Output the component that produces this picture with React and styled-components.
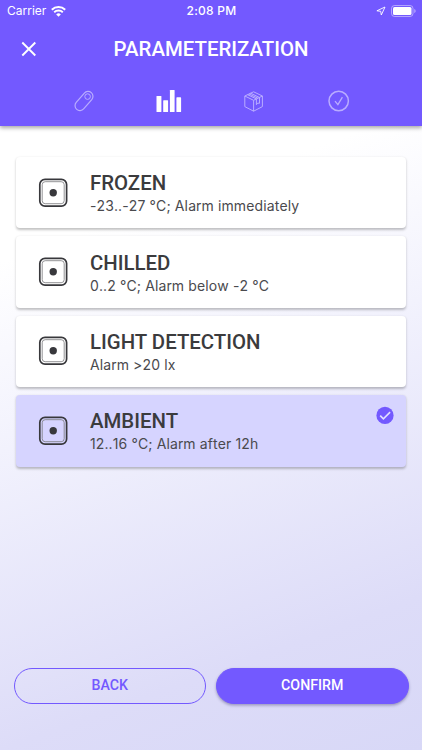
import React, { useState } from "react";
import styled, { createGlobalStyle } from "styled-components";

const GlobalStyle = createGlobalStyle`
  * {
    box-sizing: border-box;
  }

  body {
    margin: 0;
    font-family: Roboto, sans-serif;
    color: #3b3b3d;
  }

  button {
    font-family: inherit;
    cursor: pointer;
  }
`;

const Screen = styled.div`
  display: flex;
  flex-direction: column;
  height: 750px;
  overflow: hidden;
  background: linear-gradient(
    160deg,
    #ffffff 29%,
    #f2f2fd 50%,
    #dddcf8 83%,
    #d8d8f7 100%
  );
`;

const Header = styled.header`
  height: 126px;
  flex-shrink: 0;
  color: #fff;
  background: #7359ff;
  box-shadow: 0 2px 4px rgba(0, 0, 0, 0.34);
`;

const StatusBar = styled.div`
  display: grid;
  grid-template-columns: 1fr auto 1fr;
  align-items: center;
  height: 22px;
  padding: 0 6px 0 7px;
  font-family: Inter, sans-serif;
  font-size: 12px;
  line-height: 22px;
`;

const StatusGroup = styled.div`
  display: flex;
  align-items: center;
  justify-content: ${({ $end }) => ($end ? "flex-end" : "flex-start")};
  gap: 5px;
`;

const Clock = styled.span`
  font-weight: 500;
  letter-spacing: 0.25px;
`;

const TitleBar = styled.div`
  display: grid;
  grid-template-columns: 58px 1fr 58px;
  align-items: center;
  height: 54px;
`;

const CloseButton = styled.button`
  display: flex;
  justify-content: center;
  padding: 0;
  border: 0;
  color: inherit;
  background: none;
`;

const Title = styled.h1`
  margin: 0;
  font-size: 20.4px;
  font-weight: 500;
  line-height: 24px;
  text-align: center;
  white-space: nowrap;
`;

const Steps = styled.nav`
  display: grid;
  grid-template-columns: repeat(4, 85px);
  justify-content: center;
  height: 50px;
`;

const Step = styled.span`
  display: flex;
  align-items: center;
  justify-content: center;
  opacity: ${({ $active }) => ($active ? 1 : 0.5)};
`;

const List = styled.main`
  display: flex;
  flex-direction: column;
  flex: 1;
  gap: 8px;
  padding: 31px 16.4px 0;
`;

const Card = styled.button`
  display: flex;
  align-items: center;
  height: 71.4px;
  padding: 0 12px 0 21.6px;
  border: 0;
  border-radius: 4px;
  color: inherit;
  text-align: left;
  background: ${({ $selected }) => ($selected ? "#d6d4ff" : "#fff")};
  box-shadow: 0 1.5px 2.5px rgba(0, 0, 0, 0.24);
`;

const CardText = styled.span`
  display: flex;
  flex: 1;
  flex-direction: column;
  margin: 2px 0 0 22px;
`;

const CardTitle = styled.span`
  font-size: 20.4px;
  font-weight: 500;
  line-height: 24px;
`;

const CardDetail = styled.span`
  font-family: Inter, sans-serif;
  font-size: 14px;
  font-kerning: none;
  line-height: 20px;
  letter-spacing: 0.12px;
  margin-top: 1px;
  color: #4a4a4e;
`;

const Tick = styled.span`
  align-self: flex-start;
  display: flex;
  margin-top: 11px;
`;

const Footer = styled.footer`
  display: grid;
  grid-template-columns: 1fr 1fr;
  gap: 10px;
  padding: 0 13.5px 46.5px;
`;

const PillButton = styled.button`
  height: 36px;
  padding: 0 0 1px;
  border: 1px solid #7359ff;
  border-radius: 18px;
  font-size: 14.2px;
  font-weight: 500;
  color: ${({ $filled }) => ($filled ? "#fff" : "#7359ff")};
  background: ${({ $filled }) => ($filled ? "#7359ff" : "transparent")};
  box-shadow: ${({ $filled }) =>
    $filled ? "0 1.5px 3px rgba(40, 30, 90, 0.36)" : "none"};
`;

const WifiIcon = () => (
  <svg width="15" height="11" viewBox="0 0 15 11" fill="none" stroke="#fff">
    <path d="M.8 3.8a9.6 9.6 0 0 1 13.4 0" strokeWidth="2" />
    <path d="M3.2 6.3a6.2 6.2 0 0 1 8.6 0" strokeWidth="1.9" />
    <path d="M7.5 10.8 5.2 8.4a3.3 3.3 0 0 1 4.6 0z" fill="#fff" stroke="none" />
  </svg>
);

const LocationIcon = () => (
  <svg width="10" height="10" viewBox="0 0 10 10" fill="none">
    <path
      d="M9 1 .9 4.8l3.8.5L5.3 9z"
      stroke="#fff"
      strokeOpacity=".9"
      strokeLinejoin="round"
    />
  </svg>
);

const BatteryIcon = () => (
  <svg width="25" height="12" viewBox="0 0 25 12">
    <rect
      x=".5"
      y=".5"
      width="21.5"
      height="11"
      rx="3"
      fill="none"
      stroke="#fff"
      strokeOpacity=".45"
    />
    <rect x="2" y="2" width="18.5" height="8" rx="1.5" fill="#fff" />
    <path d="M23.3 4v4c.8-.3 1.3-1.1 1.3-2s-.5-1.7-1.3-2" fill="#fff" opacity=".5" />
  </svg>
);

const CloseIcon = () => (
  <svg width="16" height="16" viewBox="0 0 16 16" stroke="#fff" strokeWidth="1.9">
    <path d="m1.3 1.5 13 13m0-13-13 13" />
  </svg>
);

const LoggerIcon = () => (
  <svg width="22" height="22" viewBox="0 0 22 22" fill="none" stroke="#fff">
    <rect
      x="6.1"
      y="-.1"
      width="9.8"
      height="22.2"
      rx="4.9"
      transform="rotate(41 11 11)"
      strokeWidth="1.2"
    />
    <circle cx="14.6" cy="6.6" r="2.8" />
  </svg>
);

const BarsIcon = () => (
  <svg width="26" height="22" viewBox="0 0 26 22" fill="#fff">
    <rect x=".5" y="6" width="4.9" height="16" rx=".6" />
    <rect x="7.2" y="10.2" width="4.9" height="11.8" rx=".6" />
    <rect x="13.9" y="0" width="4.7" height="22" rx=".6" />
    <rect x="20.4" y="7.3" width="4.7" height="14.7" rx=".6" />
  </svg>
);

const PackageIcon = () => (
  <svg
    width="20"
    height="21"
    viewBox="0 0 20 21"
    fill="none"
    stroke="#fff"
    strokeLinejoin="round"
  >
    <path d="M9.6.8 18.4 5v10.6l-8.8 4.6-8.8-4.6V5zM.8 5l8.8 4.3L18.4 5M9.6 9.3v10.9" />
    <path d="m3.6 3.7 8.8 4.2v5.8l1.4-1.6 1.7.2V6.5L6.6 2.2M5.1 3l8.8 4.2" />
  </svg>
);

const CheckStepIcon = () => (
  <svg width="22" height="22" viewBox="0 0 22 22" fill="none" stroke="#fff">
    <circle cx="10.7" cy="11" r="9.7" strokeWidth="1.5" />
    <path d="m7 11.2 2.9 3.5 4.5-7.6" strokeWidth="1.3" />
  </svg>
);

const SensorIcon = () => (
  <svg width="30" height="30" viewBox="0 0 30 30" fill="none">
    <rect x="1.8" y="1.3" width="26.8" height="26.8" rx="5.2" stroke="#38383c" strokeWidth="1.7" />
    <rect x="4.2" y="3.7" width="22" height="22" rx="3" stroke="#77777b" strokeWidth=".8" />
    <circle cx="15.2" cy="14.7" r="3.7" fill="#38383c" />
  </svg>
);

const TickIcon = () => (
  <svg width="18" height="18" viewBox="0 0 18 18">
    <circle cx="9" cy="9.4" r="8.6" fill="#7359ff" />
    <path d="m4.2 9.6 3.2 3.3 6.7-6.8" fill="none" stroke="#e1deff" strokeWidth="1.6" />
  </svg>
);

const steps = [LoggerIcon, BarsIcon, PackageIcon, CheckStepIcon];

const profiles = [
  { title: "FROZEN", detail: "-23..-27 °C; Alarm immediately" },
  { title: "CHILLED", detail: "0..2 °C; Alarm below -2 °C" },
  { title: "LIGHT DETECTION", detail: "Alarm >20 lx" },
  { title: "AMBIENT", detail: "12..16 °C; Alarm after 12h" },
];

const App = () => {
  const [selected, setSelected] = useState(3);

  return (
    <Screen>
      <GlobalStyle />
      <Header>
        <StatusBar>
          <StatusGroup>
            Carrier
            <WifiIcon />
          </StatusGroup>
          <Clock>2:08 PM</Clock>
          <StatusGroup $end>
            <LocationIcon />
            <BatteryIcon />
          </StatusGroup>
        </StatusBar>
        <TitleBar>
          <CloseButton aria-label="Close">
            <CloseIcon />
          </CloseButton>
          <Title>PARAMETERIZATION</Title>
        </TitleBar>
        <Steps>
          {steps.map((Icon, idx) => (
            <Step key={idx} $active={idx === 1}>
              <Icon />
            </Step>
          ))}
        </Steps>
      </Header>

      <List>
        {profiles.map((profile, idx) => (
          <Card
            key={profile.title}
            $selected={idx === selected}
            onClick={() => setSelected(idx)}
          >
            <SensorIcon />
            <CardText>
              <CardTitle>{profile.title}</CardTitle>
              <CardDetail>{profile.detail}</CardDetail>
            </CardText>
            {idx === selected && (
              <Tick>
                <TickIcon />
              </Tick>
            )}
          </Card>
        ))}
      </List>

      <Footer>
        <PillButton>BACK</PillButton>
        <PillButton $filled>CONFIRM</PillButton>
      </Footer>
    </Screen>
  );
};

export default App;
